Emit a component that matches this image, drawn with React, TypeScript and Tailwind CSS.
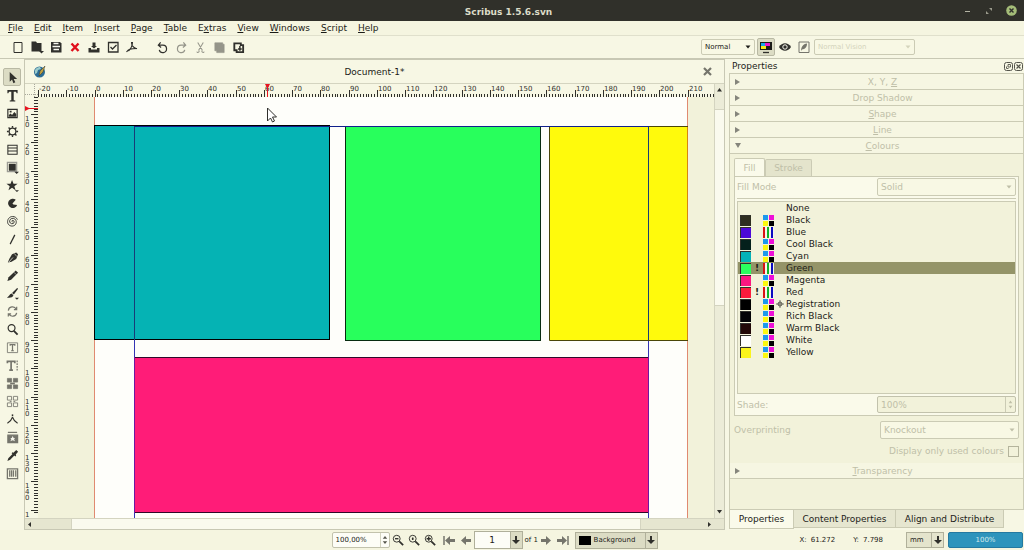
import { useState, type ReactNode } from 'react';

interface Swatch {
  name: string;
  fill?: string;
  model?: 'cmyk' | 'rgb';
  warn?: boolean;
  registration?: boolean;
}

const swatches: Swatch[] = [
  { name: 'None' },
  { name: 'Black', fill: '#2e2e20', model: 'cmyk' },
  { name: 'Blue', fill: '#4c08d8', model: 'rgb' },
  { name: 'Cool Black', fill: '#04201c', model: 'cmyk' },
  { name: 'Cyan', fill: '#04b2b8', model: 'cmyk' },
  { name: 'Green', fill: '#2aff5e', model: 'rgb', warn: true },
  { name: 'Magenta', fill: '#fc1880', model: 'cmyk' },
  { name: 'Red', fill: '#fc1c3c', model: 'rgb', warn: true },
  { name: 'Registration', fill: '#000000', model: 'cmyk', registration: true },
  { name: 'Rich Black', fill: '#020206', model: 'cmyk' },
  { name: 'Warm Black', fill: '#220808', model: 'cmyk' },
  { name: 'White', fill: '#ffffff', model: 'cmyk' },
  { name: 'Yellow', fill: '#faf41c', model: 'cmyk' },
];

const menus = ['File', 'Edit', 'Item', 'Insert', 'Page', 'Table', 'Extras', 'View', 'Windows', 'Script', 'Help'];
const menuKeys = [0, 0, 0, 0, 0, 0, 1, 0, 0, 0, 0];

// pixels per millimetre at 100% zoom
const SCALE = 2.824;
const ORIGIN_X = 56.5;
const ORIGIN_Y = -11;

function Icon({ children, size = 14 }: { children: ReactNode; size?: number }) {
  return (
    <svg width={size} height={size} viewBox="0 0 14 14" fill="none" stroke="currentColor" strokeWidth="1.3" aria-hidden="true">
      {children}
    </svg>
  );
}

const fileTools: { label: string; muted?: boolean; color?: string; icon: ReactNode }[] = [
  { label: 'New', icon: <path d="M3 2.500h8v10H3z" strokeWidth="1" /> },
  {
    label: 'Open',
    icon: (
      <>
        <path d="M1.500 1.500h4.500l1 1.500h4.500v8.500h-10z" fill="currentColor" stroke="none" />
        <path d="M9 11h5l-2.500 2.500z" fill="currentColor" stroke="none" />
      </>
    ),
  },
  {
    label: 'Save',
    icon: (
      <>
        <path d="M2 2h9l1.500 1.500v9H2z" fill="currentColor" stroke="none" />
        <path d="M4.500 3.500h5M3.500 6.500h7.500M4.500 9.500h5.500" stroke="#f7f7ee" />
      </>
    ),
  },
  { label: 'Close', color: 'text-[#e0101c]', icon: <path d="M3.500 3.500l7 7.500M10.500 3.500l-7 7.500" strokeWidth="2.400" /> },
  {
    label: 'Print',
    icon: (
      <>
        <path d="M1.500 8h2.500v1.500h6V8h2.500v4.500h-11z" fill="currentColor" stroke="none" />
        <path d="M5.500 2.500h3v3.500h1.500L7 8.500 4 6h1.500z" fill="currentColor" stroke="none" />
      </>
    ),
  },
  { label: 'Preflight', icon: <path d="M2.500 2.500h9.500v9.500H2.500zM4.500 7l2 2 4-4" /> },
  { label: 'Export as PDF', icon: <path d="M6.500 2c0 3 .5 5 5.500 7M1.500 12c2-3 4-3.500 10.500-3.500M7.500 2c0 3-1 6-4 9" strokeWidth="1.100" /> },
];

const editTools: typeof fileTools = [
  { label: 'Undo', icon: <path d="M5 1.500L2.500 4.500l3 2.500M3 4.500h4.500a4 4 0 1 1-4 5" /> },
  { label: 'Redo', muted: true, icon: <path d="M9 1.500l2.500 3-3 2.500M11 4.500H6.500a4 4 0 1 0 4 5" /> },
  { label: 'Cut', muted: true, icon: <path d="M4 1.500l5 8.500M10 1.500L5 10M3 11.500a1.300 1.300 0 1 0 2-1.500M11 11.500a1.300 1.300 0 1 1-2-1.500" strokeWidth="1.100" /> },
  { label: 'Copy', muted: true, icon: <path d="M2 2h8.500v1.500H12v9H4V10.500H2zM4 4v5.500" fill="currentColor" strokeWidth=".7" /> },
  {
    label: 'Paste',
    icon: (
      <>
        <path d="M2.500 2.500h7v2h2.500v7.500H5V10H2.500z" strokeWidth="2" />
        <path d="M8.500 5.500v5M6.500 8.500h4" strokeWidth="1.600" />
      </>
    ),
  },
];

const drawTools: { label: string; muted?: boolean; icon: ReactNode }[] = [
  { label: 'Select Item', icon: <path d="M4 1v10.500l2.500-2.300 1.500 4 2-1-1.700-3.700H12z" fill="currentColor" stroke="none" /> },
  { label: 'Text Frame', icon: <path d="M1.500 1h11v3.500h-1L10.700 3H8.300v9l1.700.5v1H4v-1l1.700-.5V3H3.300L2.500 4.500h-1z" fill="currentColor" stroke="none" /> },
  {
    label: 'Image Frame',
    icon: (
      <>
        <path d="M2 2.500h10v9H2z" />
        <path d="M3 10.500V8.500L5 7l1.500 1.500L9 5.500l2 2v3zM4 4h2v2H4z" fill="currentColor" stroke="none" />
      </>
    ),
  },
  {
    label: 'Render Frame',
    icon: (
      <>
        <circle cx="7" cy="7" r="3.600" />
        <path d="M7 1v2M7 11v2M1 7h2M11 7h2M2.800 2.800l1.400 1.400M9.800 9.800l1.400 1.400M11.200 2.800L9.800 4.200M4.200 9.800l-1.400 1.400" strokeWidth="1.500" />
      </>
    ),
  },
  { label: 'Table', icon: <path d="M2 2.500h10v9.500H2zM2 5.500h10M2 8.500h10" strokeWidth="1.100" /> },
  {
    label: 'Shape',
    icon: (
      <>
        <path d="M1.500 1.500h10v10h-10z" stroke="#9b9b94" />
        <path d="M3 3h7.500v7.500H3zM9 11.500h5L11.500 14z" fill="currentColor" stroke="none" />
      </>
    ),
  },
  { label: 'Polygon', icon: <path d="M6.500 1l1.600 4h4.400L9 7.700l1.300 4.300-3.800-2.500L2.700 12 4 7.700.5 5h4.400zM9.500 12h4.500l-2.200 2z" fill="currentColor" stroke="none" /> },
  { label: 'Arc', icon: <path d="M7 7l3.500-4A5 5 0 1 0 12 8.500L8 8a1.500 1.500 0 0 1-1-1z" fill="currentColor" stroke="none" /> },
  { label: 'Spiral', icon: <path d="M7 7.500c-1-.2-1-1.800.4-1.700 1.800.2 2 2.700.2 3.400-2.200.8-4.200-1-3.600-3.200.6-2.300 3.500-3.200 5.500-1.700 2.300 1.800 2 5.500-.5 7-2.800 1.500-6.500.2-7.200-3C1.200 5 3.500 1.700 7 1.600c2.500 0 4.500 1.400 5.300 3.400" strokeWidth="1" /> },
  { label: 'Line', icon: <path d="M9.500 2l-5 10" /> },
  {
    label: 'Bezier Curve',
    icon: (
      <>
        <path d="M11 1.500l2 2-2 5-5 3-4 1 1.500-4 3-5z" fill="currentColor" stroke="none" />
        <path d="M3 12l4.500-5M9 3l2.500 2.500" stroke="#f4f4ea" strokeWidth=".8" />
      </>
    ),
  },
  {
    label: 'Freehand Line',
    icon: (
      <>
        <path d="M10.500 1.500l2.500 2.500-7.500 7.500-4 1.500 1.300-4z" fill="currentColor" stroke="none" />
        <path d="M8.500 3.500l2.500 2.500" stroke="#f4f4ea" strokeWidth=".6" />
      </>
    ),
  },
  { label: 'Calligraphic Line', icon: <path d="M12 1l1 1-4.500 6L6.500 6.500zM6 7l2 2c-1 2.500-3.500 3-7 2.500C3.500 10 3.500 8 6 7zM9.500 11.500h4.500l-2.200 2.300z" fill="currentColor" stroke="none" /> },
  { label: 'Rotate Item', muted: true, icon: <path d="M2.500 6A4.500 4.500 0 0 1 11 4.500M11.500 2v3h-3M11.500 8.500A4.500 4.500 0 0 1 3 9.500M2.500 12.500v-3h3" /> },
  {
    label: 'Zoom',
    icon: (
      <>
        <circle cx="6" cy="5.500" r="3.700" />
        <path d="M8.500 8.500l4 4" strokeWidth="2" />
      </>
    ),
  },
  {
    label: 'Edit Contents',
    muted: true,
    icon: (
      <>
        <path d="M1.500 2h11v10.500h-11z" strokeWidth=".9" />
        <path d="M4.500 5V4h5v1M7 4v6.500M5.500 10.500h3" />
      </>
    ),
  },
  {
    label: 'Edit Text',
    muted: true,
    icon: (
      <>
        <path d="M1.500 4.500v-2h8v2M5.500 2.500V12M3.500 12h4" strokeWidth="1.800" />
        <path d="M12 1.500v11.500" strokeDasharray="2 1" />
      </>
    ),
  },
  {
    label: 'Link Text Frames',
    muted: true,
    icon: (
      <>
        <path d="M1.500 1.500H6v4H1.500zM8 1.500h4.500v4H8zM1.500 8.500H6v4H1.500zM8 8.500h4.500v4H8z" fill="currentColor" strokeWidth=".8" />
        <path d="M4.500 7h5" strokeWidth="2" />
      </>
    ),
  },
  { label: 'Unlink Text Frames', muted: true, icon: <path d="M1.500 1.500H6v4H1.500zM8 1.500h4.500v4H8zM1.500 8.500H6v4H1.500zM8 8.500h4.500v4H8zM4 7h2M8 7h2" strokeWidth=".9" /> },
  {
    label: 'Measurements',
    icon: (
      <>
        <path d="M7 4.500c-1 3-2.500 5-5.500 6.500M7 4.500c1 3 2.500 5 5.500 6.500" />
        <path d="M7 1.500v2" strokeWidth="1.600" />
      </>
    ),
  },
  {
    label: 'Copy Item Properties',
    muted: true,
    icon: (
      <>
        <path d="M2 1.500h10" />
        <path d="M2 4.500h10.500v8H2z" fill="currentColor" />
        <path d="M7.200 5.500l1 2h1.500l-1 1.500 1 2-2.500-1-2.500 1 1-2-1-1.500h1.500z" fill="#f4f4ea" stroke="none" />
      </>
    ),
  },
  { label: 'Eye Dropper', icon: <path d="M11 1l2 2-2.500 3 .5 1-1 1-1-1L4.500 11.500 1.500 13l1-3L7 5.500l-1-1 1-1 1 .5z" fill="currentColor" stroke="none" /> },
  { label: 'Barcode', muted: true, icon: <path d="M1.500 2h11v10.500h-11zM4 3.500v7M6 3.500v7M8 3.500v7M10.500 3.500v7" strokeWidth="1.400" /> },
];

function ToolButton({ label, active, children, tone = 'text-[#30302c]', disabled }: {
  label: string;
  active?: boolean;
  children: ReactNode;
  tone?: string;
  disabled?: boolean;
}) {
  return (
    <button
      type="button"
      aria-label={label}
      aria-pressed={active}
      disabled={disabled}
      className={`flex h-[18px] w-[18px] shrink-0 items-center justify-center rounded-[2px] border ${tone} ${
        active ? 'border-[#b9b9a4] bg-[#dcdcc4]' : 'border-transparent'
      }`}
    >
      {children}
    </button>
  );
}

function Select({ label, value, id, className, disabled }: {
  label: string;
  value: string;
  id?: string;
  className: string;
  disabled?: boolean;
}) {
  return (
    <span className={`relative inline-flex ${className}`}>
      <select
        id={id}
        aria-label={id ? undefined : label}
        disabled={disabled}
        defaultValue={value}
        className="w-full appearance-none rounded-[2px] border border-[#cbcbb4] bg-[#f8f8e4] px-[3px] opacity-100"
      >
        <option>{value}</option>
      </select>
      <svg className="pointer-events-none absolute top-0 right-1 h-full" width="6" viewBox="0 0 6 16" aria-hidden="true">
        <path d="M0.500 6.500h5L3 9.500z" fill="currentColor" />
      </svg>
    </span>
  );
}

function SectionRow({ label, keyAt, open }: { label: string; keyAt?: number; open?: boolean }) {
  return (
    <button type="button" aria-expanded={!!open} className="flex h-4 w-full shrink-0 items-center border-b border-[#cbcbb4] bg-[#f6f6e2] text-[#bfbfa8]">
      <svg width="8" height="8" viewBox="0 0 8 8" className="ml-1 text-[#85857c]" aria-hidden="true">
        {open ? <path d="M1 1h6L4 6z" fill="currentColor" /> : <path d="M1 1l5 3-5 3z" fill="currentColor" />}
      </svg>
      <span className="flex-1 text-center">
        {keyAt === undefined ? label : (
          <>
            {label.slice(0, keyAt)}
            <u>{label[keyAt]}</u>
            {label.slice(keyAt + 1)}
          </>
        )}
      </span>
    </button>
  );
}

function ModelIcon({ model }: { model: 'cmyk' | 'rgb' }) {
  return (
    <svg width="11" height="11" viewBox="0 0 11 11" aria-hidden="true">
      {model === 'cmyk' ? (
        <>
          <path d="M0 0h5v5H0z" fill="#1c98ee" />
          <path d="M6 0h5v5H6z" fill="#ee10d8" />
          <path d="M0 6h5v5H0z" fill="#fcf810" />
          <path d="M6 6h5v5H6z" fill="#000" />
        </>
      ) : (
        <>
          <path d="M0 0h11v11H0z" fill="#f6f6ec" />
          <path d="M0 0h2v11H0z" fill="#d81414" />
          <path d="M4 0h2v11H4z" fill="#10b428" />
          <path d="M8 0h2v11H8z" fill="#0c0cc0" />
        </>
      )}
    </svg>
  );
}

function HorizontalRuler() {
  const ticks = Array.from({ length: 240 }, (_, i) => i - 20);
  return (
    <svg className="h-[13px] min-w-0 flex-1" aria-hidden="true">
      {ticks.map(mm => (
        <rect
          key={mm}
          x={Math.round(ORIGIN_X + mm * SCALE)}
          y={mm % 10 === 0 ? 6 : 10}
          width="1"
          height={mm % 10 === 0 ? 7 : 3}
          fill="#30302c"
        />
      ))}
      {ticks.filter(mm => mm % 10 === 0).map(mm => (
        <text key={mm} x={Math.round(ORIGIN_X + mm * SCALE) + 1} y="7" fontSize="7" fill="#30302c">{mm}</text>
      ))}
      <path d="M227 0h5l-2 4v9h-1V4z" fill="#e81420" />
    </svg>
  );
}

function VerticalRuler() {
  const ticks = Array.from({ length: 148 }, (_, i) => i + 4);
  return (
    <svg className="w-[13px] shrink-0" aria-hidden="true">
      {ticks.map(mm => (
        <rect
          key={mm}
          x={mm % 10 === 0 ? 6 : 9}
          y={Math.round(ORIGIN_Y + mm * SCALE)}
          width={mm % 10 === 0 ? 7 : 4}
          height="1"
          fill="#30302c"
        />
      ))}
      {ticks.filter(mm => mm % 10 === 0).map(mm =>
        String(mm).split('').map((digit, i) => (
          <text key={`${mm}-${i}`} x="0" y={Math.round(ORIGIN_Y + mm * SCALE) + 7 + i * 6} fontSize="7" fill="#30302c">{digit}</text>
        )),
      )}
      <path d="M0 9v5l4-2h9v-1H4z" fill="#e81420" />
    </svg>
  );
}

function Canvas() {
  return (
    <svg className="min-h-0 min-w-0 flex-1 bg-[#f2f2da]" role="img" aria-label="Page with coloured frames">
      <rect x="56" y="0" width="594" height="100%" fill="#fefefa" />
      <path d="M56.500 0v1000M649.500 0v1000" stroke="#e08a70" />
      <path d="M96.500 29v1000M610.500 29v1000M96 29.500h515" stroke="#3434b4" />
      <rect x="56.500" y="28.500" width="235" height="214" fill="#05b3b4" stroke="#000" />
      <rect x="307.500" y="29.500" width="195" height="214" fill="#28ff5c" stroke="#082c10" />
      <path d="M650 29.500H511.500v214H650" fill="#fffa0c" stroke="#4a4608" />
      <path d="M649.500 30v213" stroke="#d88410" />
      <rect x="96.500" y="260.500" width="514" height="155" fill="#ff1c78" stroke="#300828" />
      <path d="M96.500 29v214M610.500 29v214" stroke="#183c78" />
      <path d="M96 29.500h515" stroke="#10208c" />
      <path d="M96.500 260v156M610.500 260v156" stroke="#6c18a0" />
      <path d="M229.500 11v13l3-3 2 4 2-1-2-4h4z" fill="#fff" stroke="#30302c" />
    </svg>
  );
}

function ColourPanel() {
  const [selected, setSelected] = useState('Green');

  return (
    <div className="flex flex-col px-1 pt-1 pb-[6px] text-[#bfbfa8]">
      <div className="flex items-end" role="tablist">
        <button type="button" role="tab" aria-selected="true" className="h-[18px] w-[31px] rounded-t-[2px] border border-b-0 border-[#cbcbb4] bg-[#fafaea]">Fill</button>
        <button type="button" role="tab" aria-selected="false" className="h-[17px] w-[47px] rounded-t-[2px] border border-b-0 border-[#cbcbb4] bg-[#e4e4cc]">Stroke</button>
      </div>
      <div className="border border-[#cbcbb4] bg-[#fafaea] px-[2px] pt-px pb-[2px]">
        <div className="flex items-center justify-between border-b border-[#cbcbb4] pb-[2px]">
          <label htmlFor="fill-mode">Fill Mode</label>
          <Select id="fill-mode" label="Fill Mode" value="Solid" disabled className="h-[18px] w-[139px]" />
        </div>
        <ul className="mt-[2px] h-[193px] border border-[#cbcbb4] bg-[#f2f2da] text-[#1c1c18]">
          {swatches.map(swatch => (
            <li key={swatch.name}>
              <button
                type="button"
                onClick={() => setSelected(swatch.name)}
                className={`flex h-3 w-full items-center pl-[2px] text-left ${selected === swatch.name ? 'bg-[#949468]' : ''}`}
              >
                <span
                  className={`h-[11px] w-[11px] ${swatch.fill ? 'border-t border-l border-[#30302c]' : ''}`}
                  style={{ backgroundColor: swatch.fill }}
                />
                <span className="w-3 text-center font-bold">{swatch.warn ? '!' : ''}</span>
                <span className="flex w-[11px]">{swatch.model && <ModelIcon model={swatch.model} />}</span>
                <span className="flex w-3 justify-center">
                  {swatch.registration && (
                    <svg width="8" height="8" viewBox="0 0 8 8" fill="none" stroke="#55554c" aria-hidden="true">
                      <circle cx="4" cy="4" r="2" />
                      <path d="M4 0v8M0 4h8" strokeWidth=".8" />
                    </svg>
                  )}
                </span>
                {swatch.name}
              </button>
            </li>
          ))}
        </ul>
        <div className="mt-[2px] flex items-center justify-between">
          <label htmlFor="shade">Shade:</label>
          <span className="flex h-[17px] w-[139px] rounded-[2px] border border-[#c2c2ac] bg-[#f2f2da]">
            <input id="shade" disabled defaultValue="100%" className="min-w-0 flex-1 px-[3px]" />
            <svg width="10" height="15" viewBox="0 0 10 15" className="border-l border-[#cbcbb4]" aria-hidden="true">
              <path d="M3 6l2-3 2 3zM3 9l2 3 2-3z" fill="currentColor" />
            </svg>
          </span>
        </div>
      </div>
      <div className="mt-[5px] flex items-center justify-between">
        <label htmlFor="overprint">Overprinting</label>
        <Select id="overprint" label="Overprinting" value="Knockout" disabled className="h-[18px] w-[139px]" />
      </div>
      <label className="mt-[6px] flex items-center justify-end gap-1">
        Display only used colours
        <input type="checkbox" disabled className="h-[11px] w-[11px] appearance-none border border-[#b4b49c]" />
      </label>
    </div>
  );
}

function DropArrow() {
  return (
    <svg width="10" height="10" viewBox="0 0 10 10" aria-hidden="true">
      <path d="M4 1h2v4h3L5 9 1 5h3z" fill="#30302c" />
    </svg>
  );
}

function PageArrow({ label, back, end }: { label: string; back?: boolean; end?: boolean }) {
  return (
    <button type="button" aria-label={label} className="flex h-4 w-4 items-center justify-center text-[#75756c]">
      <svg width="13" height="11" viewBox="0 0 13 11" className={back ? '-scale-x-100' : ''} aria-hidden="true">
        <path d="M1 4h5V1l5 4.500L6 10V7H1z" fill="currentColor" />
        {end && <path d="M12 1v9" stroke="currentColor" strokeWidth="1.500" />}
      </svg>
    </button>
  );
}

function StatusBar() {
  return (
    <footer className="flex h-5 shrink-0 items-center justify-end text-[7px] leading-[10px]">
      <span className="flex h-4 w-[58px] items-center rounded-[2px] border border-[#c2c2ac] bg-[#fdfdf6]">
        <input aria-label="Zoom" defaultValue="100,00%" className="min-w-0 flex-1 px-[3px]" />
        <svg width="9" height="14" viewBox="0 0 9 14" className="border-l border-[#d4d4c0]" aria-hidden="true">
          <path d="M2 5.500l2.500-3 2.500 3zM2 8.500l2.500 3 2.500-3z" fill="#55554c" />
        </svg>
      </span>
      <span className="flex">
        {['Zoom Out', 'Zoom to 100%', 'Zoom In'].map((label, i) => (
          <button key={label} type="button" aria-label={label} className="flex h-4 w-4 items-center justify-center text-[#30302c]">
            <Icon size={12}>
              <circle cx="5.500" cy="5.500" r="4" strokeWidth="1.100" />
              <path d="M8.500 8.500l4.500 4.500" strokeWidth="2" />
              <path d={i === 0 ? 'M3.500 5.500h4' : i === 1 ? 'M5.500 4v3M4.500 5.500h2' : 'M3 5.500h5M5.500 3v5'} strokeWidth="1.600" />
            </Icon>
          </button>
        ))}
      </span>
      <span className="ml-1 flex">
        <PageArrow label="First page" back end />
        <PageArrow label="Previous page" back />
      </span>
      <span className="flex h-[18px] w-[49px] items-center border border-[#b0b09a] bg-[#fdfdf6]">
        <input aria-label="Page" defaultValue="1" className="min-w-0 flex-1 text-center text-[9px]" />
        <span className="flex h-full w-3 items-center justify-center border-l border-[#b0b09a] bg-[#dcdcc4]"><DropArrow /></span>
      </span>
      <span className="w-4 pl-[2px] whitespace-nowrap">of 1</span>
      <span className="flex">
        <PageArrow label="Next page" />
        <PageArrow label="Last page" end />
      </span>
      <button type="button" className="ml-1 flex h-[17px] w-[83px] items-center border border-[#b0b09a] bg-[#dcdcc4] pl-[3px] text-left">
        <span className="h-[9px] w-3 bg-black" />
        <span className="flex-1 pl-[3px]">Background</span>
        <span className="flex h-full w-3 items-center justify-center border-l border-[#b0b09a]"><DropArrow /></span>
      </button>
      <output className="ml-[142px] flex gap-1"><span>X:</span><span>61.272</span></output>
      <output className="ml-[18px] flex gap-1"><span>Y:</span><span>7.798</span></output>
      <button type="button" className="ml-[23px] flex h-4 w-[38px] items-center border border-[#b0b09a] bg-[#e4e4cc] pl-[3px] text-left">
        <span className="flex-1">mm</span>
        <span className="flex h-full w-3 items-center justify-center border-l border-[#b0b09a]"><DropArrow /></span>
      </button>
      <div role="progressbar" aria-label="Progress" aria-valuenow={100} className="mr-px ml-1 h-4 w-[75px] rounded-[2px] border border-[#2479a0] bg-[#2d94bc] text-center leading-[14px] text-[#d4ecec]">
        100%
      </div>
    </footer>
  );
}

export default function App() {
  return (
    <div className="flex h-screen flex-col overflow-hidden bg-[#f5f5e0] font-['DejaVu_Sans',sans-serif] text-[9px] leading-[12px] text-[#1c1c18]">
      <header className="flex h-[21px] shrink-0 items-center bg-[#30302a] text-[#dcdcc8]">
        <span className="flex-1" />
        <h1 className="pt-[2px] font-bold">Scribus 1.5.6.svn</h1>
        <span className="flex flex-1 justify-end gap-3 pr-[7px]">
          <button type="button" aria-label="Minimise">
            <svg width="10" height="10" viewBox="0 0 10 10" aria-hidden="true"><path d="M3 5.500h5" stroke="#b4b4a4" /></svg>
          </button>
          <button type="button" aria-label="Maximise">
            <svg width="10" height="10" viewBox="0 0 10 10" aria-hidden="true"><path d="M5 2h3v3zM2 5v3h3z" fill="#9a9a8c" /></svg>
          </button>
          <button type="button" aria-label="Close window">
            <svg width="11" height="11" viewBox="0 0 11 11" aria-hidden="true">
              <circle cx="5.500" cy="5.500" r="5.300" fill="#a4bc78" />
              <path d="M3.500 3.500l4 4M7.500 3.500l-4 4" stroke="#30302c" strokeWidth="1.400" />
            </svg>
          </button>
        </span>
      </header>

      <nav className="flex h-[14px] shrink-0 items-center gap-[11px] pl-2">
        {menus.map((menu, i) => (
          <button key={menu} type="button">
            {menu.slice(0, menuKeys[i])}
            <u>{menu[menuKeys[i]]}</u>
            {menu.slice(menuKeys[i] + 1)}
          </button>
        ))}
      </nav>

      <div className="flex h-6 shrink-0 items-center border-t border-b border-[#e0e0cc] border-b-[#c8c8b4] bg-[#f7f7e4] pr-[109px] pl-[9px]">
        <div className="flex gap-px">
          {fileTools.map(tool => (
            <ToolButton key={tool.label} label={tool.label} tone={tool.color}><Icon>{tool.icon}</Icon></ToolButton>
          ))}
        </div>
        <div className="ml-3 flex gap-px">
          {editTools.map(tool => (
            <ToolButton key={tool.label} label={tool.label} disabled={tool.muted} tone={tool.muted ? 'text-[#95958a]' : undefined}>
              <Icon size={13}>{tool.icon}</Icon>
            </ToolButton>
          ))}
        </div>
        <div className="ml-auto flex items-center gap-px text-[7px] leading-[10px]">
          <Select label="Preview quality" value="Normal" className="mr-px h-4 w-[54px]" />
          <ToolButton label="Colour management" active>
            <Icon>
              <path d="M1 2h12v8H1z" fill="#1c1c18" stroke="none" />
              <path d="M2 3h4v3H2z" fill="#18a8e8" stroke="none" />
              <path d="M6 3h5v3H6z" fill="#e818c8" stroke="none" />
              <path d="M2 6h5v3H2z" fill="#f8e818" stroke="none" />
              <path d="M4 12.500h6" />
            </Icon>
          </ToolButton>
          <ToolButton label="Preview mode">
            <Icon>
              <path d="M1 7c3-5 9-5 12 0-3 5-9 5-12 0z" fill="currentColor" stroke="none" />
              <circle cx="7" cy="7" r="2.200" stroke="#f7f7ec" strokeWidth="1" />
            </Icon>
          </ToolButton>
          <ToolButton label="Edit in preview" tone="text-[#75756c]">
            <Icon>
              <path d="M2 2h10v10.500H2z" strokeWidth="1" />
              <path d="M10 3.500c0 4-2 5.500-5 6l-1 1.500c0-4 2-7 6-7.500z" fill="currentColor" stroke="none" />
            </Icon>
          </ToolButton>
          <span className="text-[#d4d4bc]">
            <Select label="Vision defect" value="Normal Vision" disabled className="h-4 w-[101px]" />
          </span>
        </div>
      </div>

      <div className="flex min-h-0 flex-1 bg-[#f7f7e4]">
        <aside className="flex w-6 shrink-0 flex-col overflow-hidden pt-[9px] pl-[3px]" aria-label="Tools">
          {drawTools.map((tool, i) => (
            <ToolButton key={tool.label} label={tool.label} active={i === 0} tone={tool.muted ? 'text-[#75756c]' : undefined}>
              <Icon size={13}>{tool.icon}</Icon>
            </ToolButton>
          ))}
        </aside>

        <main className="flex min-w-0 flex-1 flex-col border border-[#c8c8b4]">
          <div className="flex h-6 shrink-0 items-center border-b border-[#d4d4c0] pr-3 pl-2">
            <svg width="13" height="13" viewBox="0 0 13 13" aria-hidden="true">
              <circle cx="6.500" cy="7" r="5.500" fill="#2c6c94" />
              <path d="M2 5c2-3 4-3 5-3l1 2-3 1-1 3-2 1z" fill="#9ccccc" />
              <path d="M12 1L7 6l-1 5 4-4z" fill="#c0a040" stroke="#38382c" strokeWidth=".5" />
            </svg>
            <h2 className="flex-1 text-center">Document-1*</h2>
            <button type="button" aria-label="Close document" className="text-[#75756c]">
              <svg width="9" height="9" viewBox="0 0 9 9" aria-hidden="true">
                <path d="M1 1l7 7M8 1L1 8" stroke="currentColor" strokeWidth="2.200" />
              </svg>
            </button>
          </div>
          <div className="flex min-h-0 flex-1">
            <div className="flex min-w-0 flex-1 flex-col">
              <div className="flex shrink-0">
                <svg width="13" height="13" viewBox="0 0 13 13" aria-hidden="true">
                  <path d="M0 10.500h13M9.500 0v13" stroke="#a8a89c" strokeDasharray="1 1" />
                </svg>
                <HorizontalRuler />
              </div>
              <div className="flex min-h-0 flex-1">
                <VerticalRuler />
                <Canvas />
              </div>
            </div>
            <div className="flex w-[10px] shrink-0 flex-col items-center border-l border-[#d4d4c0] bg-[#ececd8]">
              <svg width="9" height="12" viewBox="0 0 9 12" aria-hidden="true"><path d="M2 7.500L4.500 4 7 7.500z" fill="#30302c" /></svg>
              <span className="h-[13px]" />
              <span className="h-[197px] w-full border-y border-[#d4d4c0] bg-[#fafaee]" />
              <span className="flex-1" />
              <svg width="9" height="12" viewBox="0 0 9 12" aria-hidden="true"><path d="M2 4h5L4.500 7.500z" fill="#30302c" /></svg>
            </div>
          </div>
          <div className="flex h-[11px] shrink-0 items-center border-t border-[#d4d4c0] bg-[#e6e6d0]">
            <svg width="10" height="9" viewBox="0 0 10 9" aria-hidden="true"><path d="M6 2v5L3 4.500z" fill="#30302c" /></svg>
            <span className="w-9 shrink-0" />
            <span className="h-full flex-1 border-x border-[#d4d4c0] bg-[#fafaee]" />
            <span className="w-[63px] shrink-0" />
            <svg width="20" height="9" viewBox="0 0 20 9" aria-hidden="true"><path d="M4 2v5l3-2.500z" fill="#30302c" /></svg>
          </div>
        </main>

        <aside className="ml-1 flex w-[295px] shrink-0 flex-col">
          <div className="flex h-[14px] shrink-0 items-center pl-[3px]">
            <h2 className="flex-1">Properties</h2>
            <button type="button" aria-label="Float panel">
              <svg width="10" height="9" viewBox="0 0 10 9" fill="none" stroke="#55554c" aria-hidden="true">
                <rect x=".5" y=".5" width="8" height="8" rx="2" />
                <path d="M4 2.500h2.500V5H4zM2.500 4.500v2h2" strokeWidth=".9" />
              </svg>
            </button>
            <button type="button" aria-label="Close panel">
              <svg width="10" height="9" viewBox="0 0 10 9" fill="none" stroke="#55554c" aria-hidden="true">
                <rect x=".5" y=".5" width="8" height="8" rx="2" />
                <path d="M2.500 2.500l4 4M6.500 2.500l-4 4" strokeWidth="1.200" />
              </svg>
            </button>
          </div>
          <div className="min-h-0 flex-1 overflow-hidden border border-[#cbcbb4] bg-[#f2f2da]">
            <SectionRow label="X, Y, Z" keyAt={6} />
            <SectionRow label="Drop Shadow" />
            <SectionRow label="Shape" keyAt={0} />
            <SectionRow label="Line" keyAt={0} />
            <SectionRow label="Colours" keyAt={0} open />
            <ColourPanel />
            <SectionRow label="Transparency" keyAt={0} />
          </div>
          <div className="flex h-5 shrink-0 items-start" role="tablist">
            <button type="button" role="tab" aria-selected="true" className="h-[19px] w-[65px] border border-t-0 border-[#cbcbb4] bg-[#fafaea]">Properties</button>
            <button type="button" role="tab" aria-selected="false" className="h-[18px] w-[102px] border border-t-0 border-l-0 border-[#cbcbb4] bg-[#e6e6d0]">Content Properties</button>
            <button type="button" role="tab" aria-selected="false" className="h-[18px] w-[108px] border border-t-0 border-l-0 border-[#cbcbb4] bg-[#e6e6d0]">Align and Distribute</button>
          </div>
        </aside>
      </div>

      <StatusBar />
    </div>
  );
}
